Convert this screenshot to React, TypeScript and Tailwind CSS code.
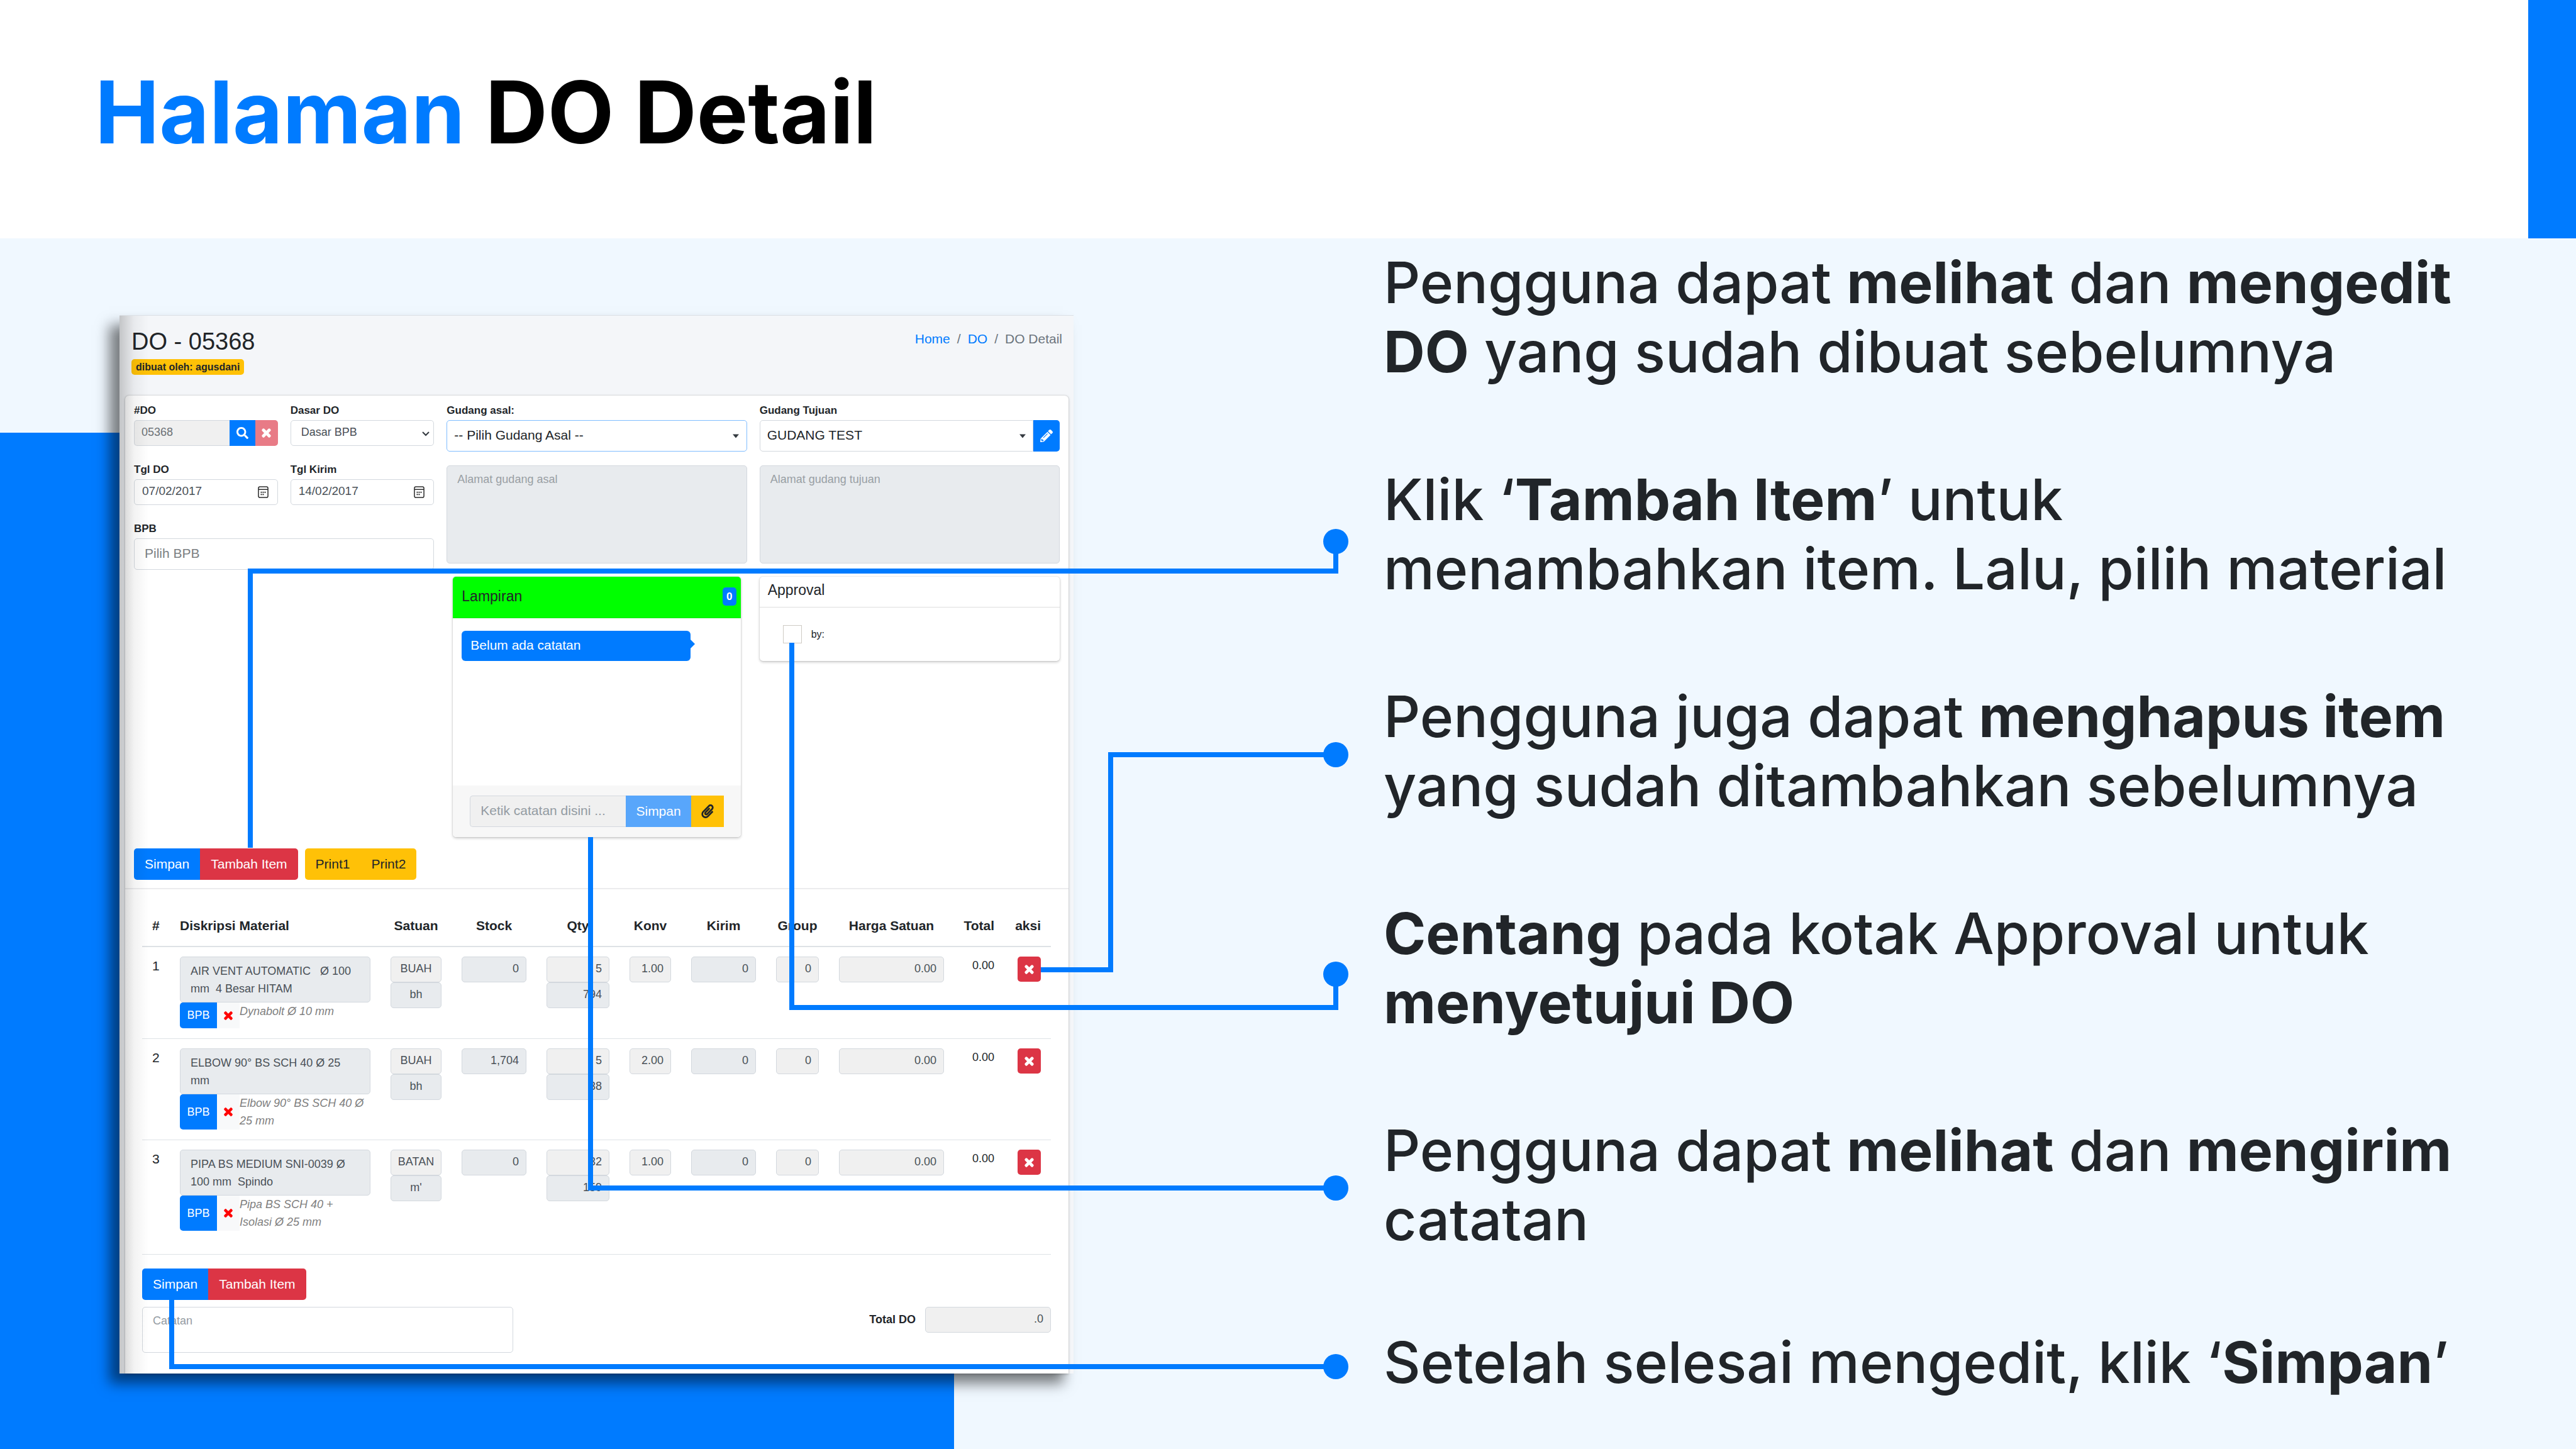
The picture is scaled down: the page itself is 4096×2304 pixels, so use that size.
import React from "react";
import { FaPaperclip, FaPencilAlt, FaSearch, FaTimes } from "react-icons/fa";

const label = "block text-[17px] leading-[24px] font-bold mb-[3px]";
const field = "block w-full border border-[#d3d8de] rounded-[5px] text-[#495057]";
const btn = "h-[50px] px-[17px] text-[21px] leading-[30px]";

function CrossIcon() {
  return <FaTimes strokeWidth={36} />;
}

function CalendarIcon() {
  return (
    <svg viewBox="0 0 18 20" className="w-[17px] h-[19px]" fill="none" stroke="#2b2b2b" strokeWidth="1.6">
      <rect x="1" y="1" width="16" height="18" rx="2.5" />
      <path d="M1 5.5h16" />
      <path d="M8 10.2h2M11.2 10.2h2M4.8 10.2h2M4.8 14h2M8 14h2" strokeWidth="2" />
    </svg>
  );
}

function DateField({ id, title, value }: { id: string; title: string; value: string }) {
  return (
    <div>
      <label htmlFor={id} className={label}>{title}</label>
      <div className="relative">
        <input id={id} type="text" defaultValue={value} className={`${field} h-[41px] px-[12px] pb-[3px] text-[19px] bg-white`} />
        <button type="button" aria-label={`Buka kalender ${title}`} className="absolute right-[15px] top-[11px]">
          <CalendarIcon />
        </button>
      </div>
    </div>
  );
}

function Caret({ className }: { className: string }) {
  return (
    <svg viewBox="0 0 10 6" className={`absolute w-[10px] h-[7px] pointer-events-none ${className}`} fill="#343a40">
      <path d="M0 0h10L5 6z" />
    </svg>
  );
}

function SaveAddButtons() {
  return (
    <div className="flex text-white">
      <button type="button" className={`${btn} bg-[#007bff] rounded-l-[5px]`}>Simpan</button>
      <button type="button" className={`${btn} bg-[#dc3545] rounded-r-[5px]`}>Tambah Item</button>
    </div>
  );
}

function Cell({ name, value, dark, center }: { name: string; value: string; dark?: boolean; center?: boolean }) {
  return (
    <input
      type="text"
      readOnly
      aria-label={name}
      defaultValue={value}
      className={`${field} h-[41px] pb-[3px] text-[18px] ${dark ? "bg-[#e8ebee]" : "bg-[#f0f0f0]"} ${center ? "px-2 text-center" : "px-[11px] text-right"}`}
    />
  );
}

const rows = [
  { no: 1, item: "AIR VENT AUTOMATIC   Ø 100 mm  4 Besar HITAM", note: "Dynabolt Ø 10 mm", unit: "BUAH", unit2: "bh", stock: "0", qty: "5", qty2: "794", konv: "1.00" },
  { no: 2, item: "ELBOW 90° BS SCH 40 Ø 25 mm", note: "Elbow 90° BS SCH 40 Ø 25 mm", unit: "BUAH", unit2: "bh", stock: "1,704", qty: "5", qty2: "38", konv: "2.00" },
  { no: 3, item: "PIPA BS MEDIUM SNI-0039 Ø 100 mm  Spindo", note: "Pipa BS SCH 40 + Isolasi Ø 25 mm", unit: "BATAN", unit2: "m'", stock: "0", qty: "32", qty2: "159", konv: "1.00" },
];

function ItemTable() {
  const td = "px-[16px] pt-[15px] pb-[16px] align-top";
  const th = "px-[16px] pt-[16px] pb-[17px]";
  return (
    <table className="w-full table-fixed border-b border-[#dee2e6]">
      <colgroup>
        <col className="w-[44px]" />
        <col />
        <col className="w-[113px]" />
        <col className="w-[135px]" />
        <col className="w-[132px]" />
        <col className="w-[98px]" />
        <col className="w-[135px]" />
        <col className="w-[100px]" />
        <col className="w-[199px]" />
        <col className="w-[80px]" />
        <col className="w-[74px]" />
      </colgroup>
      <thead className="text-[21px] leading-[30px] border-b-2 border-[#dee2e6]">
        <tr>
          <th className={`${th} text-left`}>#</th>
          <th className={`${th} text-left`}>Diskripsi Material</th>
          <th className={th}><span className="flex justify-center">Satuan</span></th>
          <th className={th}>Stock</th>
          <th className={th}>Qty</th>
          <th className={th}>Konv</th>
          <th className={th}>Kirim</th>
          <th className={th}><span className="flex justify-center">Group</span></th>
          <th className={th}>Harga Satuan</th>
          <th className={th}><span className="flex justify-end">Total</span></th>
          <th className={th}><span className="flex justify-end">aksi</span></th>
        </tr>
      </thead>
      <tbody>
        {rows.map((r) => (
          <tr key={r.no} className="border-t border-[#dee2e6] first:border-t-0 last:[&>td]:pb-[37px]">
            <td className={`${td} text-[21px] leading-[30px]`}>{r.no}</td>
            <td className={td}>
              <textarea
                readOnly
                rows={2}
                aria-label="Diskripsi Material"
                defaultValue={r.item}
                className={`${field} h-[73px] px-[16px] py-[8px] text-[18px] leading-[28px] bg-[#e8ebee] resize-none overflow-hidden`}
              />
              <div className="flex">
                <button type="button" className="min-h-[41px] w-[59px] shrink-0 bg-[#007bff] text-white text-[18px] rounded-l-[5px]">BPB</button>
                <button type="button" aria-label="Hapus BPB" className="w-[36px] shrink-0 bg-[#f8f9fa] text-[#ff0000] text-[18px] flex items-center justify-center">
                  <CrossIcon />
                </button>
                <em className="pr-[6px] text-[18px] leading-[28px] text-[#808080]">{r.note}</em>
              </div>
            </td>
            <td className={td}>
              <Cell name="Satuan" value={r.unit} center />
              <Cell name="Satuan dasar" value={r.unit2} dark center />
            </td>
            <td className={td}><Cell name="Stock" value={r.stock} dark /></td>
            <td className={td}>
              <Cell name="Qty" value={r.qty} />
              <Cell name="Qty dasar" value={r.qty2} dark />
            </td>
            <td className={td}><Cell name="Konv" value={r.konv} /></td>
            <td className={td}><Cell name="Kirim" value="0" dark /></td>
            <td className={td}><Cell name="Group" value="0" /></td>
            <td className={td}><Cell name="Harga Satuan" value="0.00" /></td>
            <td className={`${td} text-right text-[18px] leading-[28px]`}>0.00</td>
            <td className={td}>
              <button type="button" aria-label="Hapus item" className="ml-auto w-[37px] h-[40px] bg-[#dc3545] text-white text-[19px] rounded-[5px] flex items-center justify-center">
                <CrossIcon />
              </button>
            </td>
          </tr>
        ))}
      </tbody>
    </table>
  );
}

function LampiranCard() {
  return (
    <section className="mx-[10px] mt-[21px] rounded-[5px] overflow-hidden bg-white shadow-[0_0_2px_rgba(0,0,0,0.2),0_2px_4px_rgba(0,0,0,0.2)]">
      <header className="flex items-center justify-between bg-[#00ff00] border-b border-black/10 pl-[14px] pr-[7px] pt-[14px] pb-[17px]">
        <h3 className="text-[23px] leading-[34px]">Lampiran</h3>
        <span className="bg-[#007bff] text-white font-bold text-[17px] leading-[29px] w-[22px] text-center rounded-[5px]">0</span>
      </header>
      <div className="pt-[20px] px-[14px] h-[266px]">
        <p className="relative w-[364px] h-[48px] bg-[#007bff] text-white text-[21px] leading-[46px] px-[14px] rounded-[6px]">
          Belum ada catatan
          <svg viewBox="0 0 7 14" className="absolute left-full top-[14px] w-[7px] h-[14px]" fill="#007bff">
            <path d="M0 0l7 7-7 7z" />
          </svg>
        </p>
      </div>
      <footer className="flex bg-[#f7f7f7] px-[27px] py-[16px]">
        <input
          type="text"
          aria-label="Ketik catatan disini"
          placeholder="Ketik catatan disini ..."
          className="min-w-0 flex-1 h-[50px] pb-[2px] border border-r-0 border-[#d3d8de] rounded-l-[5px] bg-[#f0f0f0] px-[16px] text-[21px] placeholder:text-[#939ba2]"
        />
        <button type="button" className="h-[50px] px-[16px] text-[21px] leading-[30px] bg-[#58a6fb] text-white">Simpan</button>
        <button type="button" aria-label="Lampirkan berkas" className="w-[52px] bg-[#ffc107] text-[22px] flex items-center justify-center">
          <FaPaperclip />
        </button>
      </footer>
    </section>
  );
}

function ApprovalCard() {
  return (
    <section className="mt-[21px] rounded-[5px] bg-white shadow-[0_0_2px_rgba(0,0,0,0.2),0_2px_4px_rgba(0,0,0,0.2)]">
      <h3 className="text-[23px] leading-[34px] pl-[13px] pt-[4px] pb-[10px] border-b border-[#dfdfdf]">Approval</h3>
      <label className="flex items-center gap-[15px] pl-[37px] pt-[28px] pb-[28px] text-[16px] leading-[24px]">
        <input type="checkbox" className="appearance-none w-[30px] h-[29px] border border-[#cfcbc4] bg-white" />
        by:
      </label>
    </section>
  );
}

function DoForm() {
  return (
    <div className="px-[14px] pt-[12px] pb-[13px] border-b-2 border-[#ececee]">
      <div className="grid grid-cols-3 gap-x-[20px]">
        <div className="grid grid-cols-2 gap-x-[20px] gap-y-[26px] content-start">
          <div>
            <label htmlFor="no-do" className={label}>#DO</label>
            <div className="flex">
              <input id="no-do" type="text" readOnly defaultValue="05368" className="min-w-0 flex-1 h-[41px] pb-[3px] px-[11px] border border-r-0 border-[#d3d8de] rounded-l-[5px] bg-[#f0f0f0] text-[18px] text-[#6c7176]" />
              <button type="button" aria-label="Cari DO" className="w-[41px] bg-[#007bff] text-white text-[19px] flex items-center justify-center"><FaSearch /></button>
              <button type="button" aria-label="Hapus DO" className="w-[36px] bg-[#e87b86] text-white text-[19px] rounded-r-[5px] flex items-center justify-center"><CrossIcon /></button>
            </div>
          </div>
          <div>
            <label htmlFor="dasar-do" className={label}>Dasar DO</label>
            <div className="relative">
              <select id="dasar-do" className={`${field} appearance-none h-[41px] pb-[3px] px-[16px] text-[18px] bg-white`}>
                <option>Dasar BPB</option>
              </select>
              <svg viewBox="0 0 12 8" className="absolute right-[7px] top-[18px] w-[12px] h-[8px] pointer-events-none" fill="none" stroke="#343a40" strokeWidth="2">
                <path d="M1 1l5 5 5-5" />
              </svg>
            </div>
          </div>
          <DateField id="tgl-do" title="Tgl DO" value="07/02/2017" />
          <DateField id="tgl-kirim" title="Tgl Kirim" value="14/02/2017" />
          <div className="col-span-2">
            <label htmlFor="bpb" className={label}>BPB</label>
            <input id="bpb" type="text" placeholder="Pilih BPB" className={`${field} h-[50px] pb-[3px] px-[16px] text-[21px] bg-white placeholder:text-[#7b7f83]`} />
          </div>
        </div>

        <div>
          <label htmlFor="gudang-asal" className={label}>Gudang asal:</label>
          <div className="relative mb-[22px]">
            <select id="gudang-asal" className="block w-full appearance-none h-[50px] pb-[3px] pl-[11px] text-[21px] bg-white border border-[#80bdff] rounded-[5px]">
              <option>-- Pilih Gudang Asal --</option>
            </select>
            <Caret className="right-[13px] top-[22px]" />
          </div>
          <textarea aria-label="Alamat gudang asal" placeholder="Alamat gudang asal" className={`${field} h-[156px] px-[16px] py-[7px] text-[18px] leading-[28px] bg-[#e8ebee] resize-none placeholder:text-[#999fa4]`} />
          <LampiranCard />
        </div>

        <div>
          <label htmlFor="gudang-tujuan" className={label}>Gudang Tujuan</label>
          <div className="flex mb-[22px]">
            <div className="relative flex-1">
              <select id="gudang-tujuan" className="block w-full appearance-none h-[50px] pb-[3px] pl-[11px] text-[21px] bg-white border border-[#d3d8de] rounded-l-[5px]">
                <option>GUDANG TEST</option>
              </select>
              <Caret className="right-[12px] top-[22px]" />
            </div>
            <button type="button" aria-label="Ubah gudang tujuan" className="w-[42px] bg-[#007bff] text-white text-[20px] rounded-r-[5px] flex items-center justify-center"><FaPencilAlt /></button>
          </div>
          <textarea aria-label="Alamat gudang tujuan" placeholder="Alamat gudang tujuan" className={`${field} h-[156px] px-[16px] py-[7px] text-[18px] leading-[28px] bg-[#e8ebee] resize-none placeholder:text-[#999fa4]`} />
          <ApprovalCard />
        </div>
      </div>

      <div className="flex gap-[11px] mt-[18px]">
        <SaveAddButtons />
        <div className="flex bg-[#ffc107] rounded-[5px]">
          <button type="button" className={btn}>Print1</button>
          <button type="button" className={btn}>Print2</button>
        </div>
      </div>
    </div>
  );
}

function DoPanel() {
  return (
    <section className="relative self-start mt-[122px] bg-[#f4f6f9] border-t border-[#dbe0e6] text-[#212529] font-['Liberation_Sans',Arial,sans-serif] shadow-[-16px_16px_20px_rgba(0,0,0,0.5)]">
      <header className="flex justify-between items-start pl-[19px] pr-[18px] pt-[18px]">
        <div>
          <h2 className="text-[38px] leading-[46px]">DO - 05368</h2>
          <span className="inline-block mt-[5px] bg-[#ffc107] rounded-[5px] px-[7px] text-[16px] leading-[25px] font-bold">dibuat oleh: agusdani</span>
        </div>
        <nav aria-label="Breadcrumb" className="flex gap-[11px] pt-[3px] text-[21px] leading-[32px] text-[#6c757d]">
          <a href="#home" className="text-[#007bff]">Home</a>
          <span>/</span>
          <a href="#do" className="text-[#007bff]">DO</a>
          <span>/</span>
          <span>DO Detail</span>
        </nav>
      </header>
      <div className="mt-[33px] ml-[9px] mr-[8px] bg-white rounded-t-[6px] shadow-[0_0_2px_rgba(0,0,0,0.2),0_1px_4px_rgba(0,0,0,0.2)]">
        <DoForm />
        <div className="px-[28px] pl-[27px] pt-[27px] pb-[33px]">
          <ItemTable />
          <div className="flex flex-col gap-[11px] mt-[22px]">
            <SaveAddButtons />
            <div className="flex items-start justify-between">
              <textarea aria-label="Catatan" placeholder="Catatan" className="block w-[590px] h-[73px] border border-[#d3d8de] rounded-[5px] px-[16px] py-[7px] text-[18px] leading-[28px] resize-none placeholder:text-[#939ba2]" />
              <div className="flex items-center gap-[15px]">
                <label htmlFor="total-do" className="text-[18px] font-bold">Total DO</label>
                <input id="total-do" type="text" readOnly defaultValue=".0" className="w-[200px] h-[41px] pb-[3px] px-[11px] border border-[#d3d8de] rounded-[5px] bg-[#f0f0f0] text-[18px] text-right text-[#495057]" />
              </div>
            </div>
          </div>
        </div>
      </div>
      <div className="absolute inset-y-0 left-0 w-[46px] bg-linear-to-r from-black/20 via-black/5 to-transparent pointer-events-none" />
    </section>
  );
}

function Connectors() {
  const lines = [
    "398,1348 398,908 2124,908 2124,861",
    "1655,1542 1766,1542 1766,1200 2124,1200",
    "1259,1022 1259,1602 2124,1602 2124,1549",
    "939,1331 939,1889 2124,1889",
    "273,2067 273,2173 2124,2173",
  ];
  const dots = [861, 1200, 1549, 1889, 2173];
  return (
    <svg viewBox="0 0 4096 2304" preserveAspectRatio="none" className="absolute inset-0 w-full h-full pointer-events-none" fill="none" stroke="#007bff" strokeWidth="8">
      {lines.map((p) => <polyline key={p} points={p} />)}
      {dots.map((y) => <circle key={y} cx="2124" cy={y} r="20" fill="#007bff" stroke="none" />)}
    </svg>
  );
}

export default function App() {
  return (
    <main className="relative min-h-screen overflow-hidden bg-[#f0f8ff] font-[Inter,sans-serif]">
      <div className="absolute left-0 bottom-0 top-[688px] w-10/27 bg-[#007bff]" />
      <header className="flex justify-between bg-white">
        <h1 className="pl-[151px] pt-[110px] pb-[132px] text-[137px] leading-[137px] font-bold text-black">
          <span className="text-[#007bff]">Halaman</span> DO Detail
        </h1>
        <div className="w-[76px] bg-[#007bff]" />
      </header>
      <div className="grid grid-cols-[190fr_1517fr_493fr_1896fr]">
        <div />
        <DoPanel />
        <div />
        <div className="flex flex-col gap-[125px] pt-[15px] text-[91px] leading-[110px] font-medium text-[#212529]">
          <p>Pengguna dapat <b className="font-bold">melihat</b> dan <b className="font-bold">mengedit<br />DO</b> yang sudah dibuat sebelumnya</p>
          <p>Klik ‘<b className="font-bold">Tambah Item</b>’ untuk<br />menambahkan item. Lalu, pilih material</p>
          <p>Pengguna juga dapat <b className="font-bold">menghapus item</b><br />yang sudah ditambahkan sebelumnya</p>
          <p><b className="font-bold">Centang</b> pada kotak Approval untuk<br /><b className="font-bold">menyetujui DO</b></p>
          <div className="flex flex-col gap-[117px]">
            <p>Pengguna dapat <b className="font-bold">melihat</b> dan <b className="font-bold">mengirim</b><br />catatan</p>
            <p>Setelah selesai mengedit, klik ‘<b className="font-bold">Simpan</b>’</p>
          </div>
        </div>
      </div>
      <Connectors />
    </main>
  );
}
